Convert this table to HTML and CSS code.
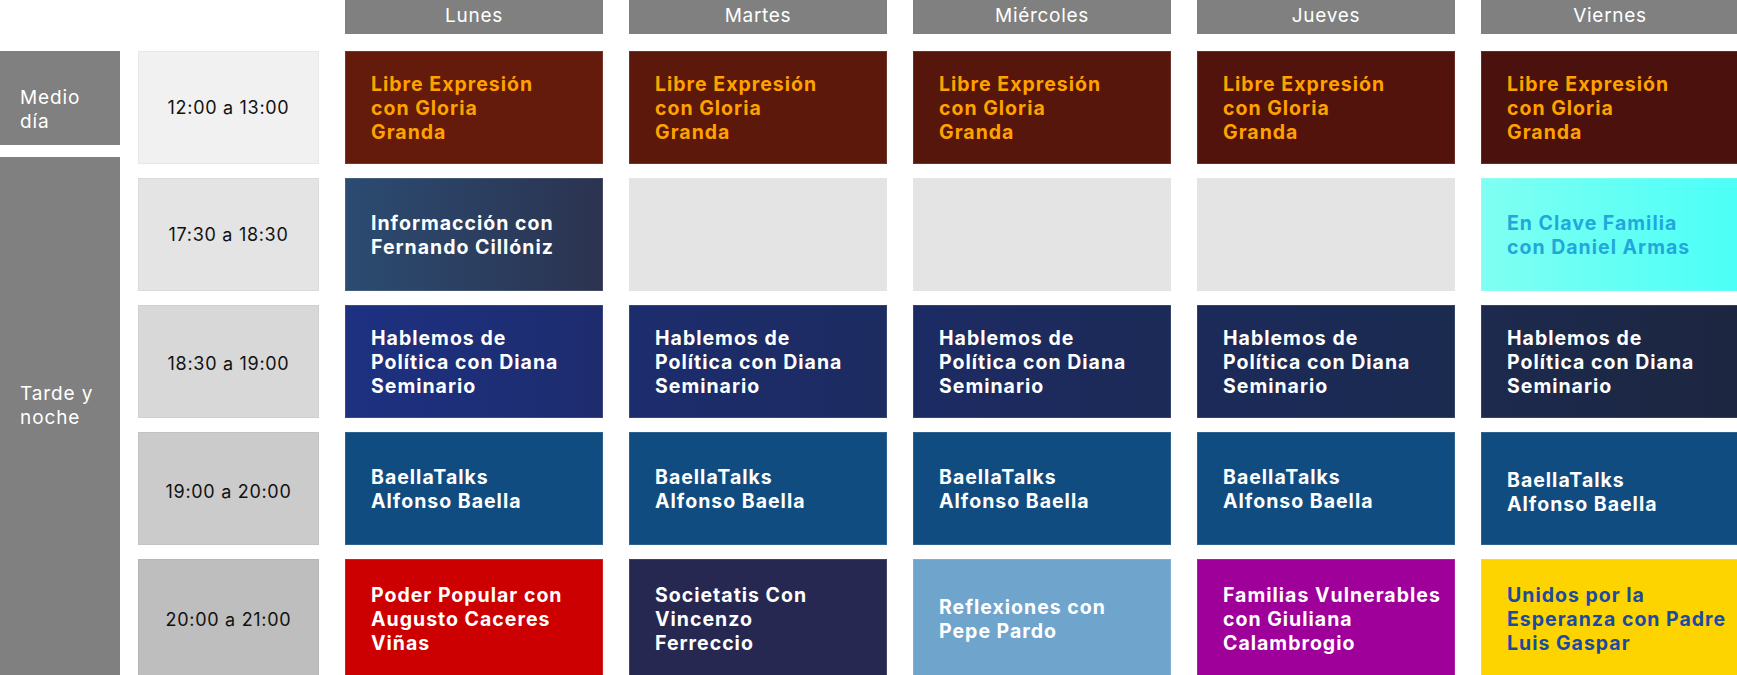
FILE: index.html
```html
<!DOCTYPE html>
<html lang="es">
<head>
  <meta charset="UTF-8">
  <meta name="viewport" content="width=device-width, initial-scale=1.0">
  <title>Programación</title>
  <link rel="stylesheet" href="styles.css">
</head>
<body>
  <div class="schedule">
    <div class="corner"></div>
    <div class="day">Lunes</div>
    <div class="day">Martes</div>
    <div class="day">Miércoles</div>
    <div class="day">Jueves</div>
    <div class="day">Viernes</div>

    <div class="blocks">
      <div class="block block-noon">Medio<br>día</div>
      <div class="block block-night">Tarde y<br>noche</div>
    </div>

    <!-- 12:00 -->
    <div class="time t1">12:00 a 13:00</div>
    <div class="show libre l1">Libre Expresión<br>con Gloria<br>Granda</div>
    <div class="show libre l2">Libre Expresión<br>con Gloria<br>Granda</div>
    <div class="show libre l3">Libre Expresión<br>con Gloria<br>Granda</div>
    <div class="show libre l4">Libre Expresión<br>con Gloria<br>Granda</div>
    <div class="show libre l5">Libre Expresión<br>con Gloria<br>Granda</div>

    <!-- 17:30 -->
    <div class="time t2">17:30 a 18:30</div>
    <div class="show info">Informacción con<br>Fernando Cillóniz</div>
    <div class="show empty"></div>
    <div class="show empty"></div>
    <div class="show empty"></div>
    <div class="show clave">En Clave Familia<br>con Daniel Armas</div>

    <!-- 18:30 -->
    <div class="time t3">18:30 a 19:00</div>
    <div class="show politica p1">Hablemos de<br>Política con Diana<br>Seminario</div>
    <div class="show politica p2">Hablemos de<br>Política con Diana<br>Seminario</div>
    <div class="show politica p3">Hablemos de<br>Política con Diana<br>Seminario</div>
    <div class="show politica p4">Hablemos de<br>Política con Diana<br>Seminario</div>
    <div class="show politica p5">Hablemos de<br>Política con Diana<br>Seminario</div>

    <!-- 19:00 -->
    <div class="time t4">19:00 a 20:00</div>
    <div class="show baella">BaellaTalks<br>Alfonso Baella</div>
    <div class="show baella">BaellaTalks<br>Alfonso Baella</div>
    <div class="show baella">BaellaTalks<br>Alfonso Baella</div>
    <div class="show baella">BaellaTalks<br>Alfonso Baella</div>
    <div class="show baella last">BaellaTalks<br>Alfonso Baella</div>

    <!-- 20:00 -->
    <div class="time t5">20:00 a 21:00</div>
    <div class="show poder">Poder Popular con<br>Augusto Caceres<br>Viñas</div>
    <div class="show societatis">Societatis Con<br>Vincenzo<br>Ferreccio</div>
    <div class="show reflexiones">Reflexiones con<br>Pepe Pardo</div>
    <div class="show familias">Familias Vulnerables<br>con Giuliana<br>Calambrogio</div>
    <div class="show unidos">Unidos por la<br>Esperanza con Padre<br>Luis Gaspar</div>
  </div>
</body>
</html>
```

FILE: styles.css
```css
body { margin: 0; background: #fff; font-family: Inter, 'Open Sans', Arial, sans-serif; overflow: hidden; }
.schedule { display: grid; grid-template-columns: 120px 173px repeat(5, 258px); grid-template-rows: 37px repeat(4, 113px) 120px; column-gap: 26px; row-gap: 14px; width: 1760px; }
.corner { grid-column: 1 / span 2; }
.day { height: 34px; padding-bottom: 3px; box-sizing: border-box; background: #808080; color: #fff; font-size: 19px; letter-spacing: 0.7px; display: flex; align-items: center; justify-content: center; }
.blocks { grid-column: 1; grid-row: 2 / span 5; display: flex; flex-direction: column; gap: 12px; }
.block { background: #808080; color: #fff; font-size: 19px; letter-spacing: 0.9px; line-height: 24px; padding-left: 20px; box-sizing: border-box; }
.block-noon { height: 94px; padding-top: 35px; }
.block-night { flex: 1; margin-bottom: -10px; display: flex; align-items: center; padding-bottom: 34px; }
.time { margin-left: -8px; display: flex; align-items: center; justify-content: center; font-size: 18px; letter-spacing: 0.7px; color: #111; border: 1px solid rgba(0,0,0,0.04); }
.t1 { background: #f1f1f1; }
.t2 { background: #e4e4e4; }
.t3 { background: #d8d8d8; padding-top: 4px; }
.t4 { background: #cbcbcb; padding-top: 6px; }
.t5 { background: #bebebe; }
.show { display: flex; align-items: center; padding-left: 26px; font-size: 19.5px; font-weight: 700; letter-spacing: 1px; line-height: 24px; color: #fff; white-space: nowrap; box-shadow: inset 0 0 0 1px rgba(255,255,255,0.12); }
.libre { color: #ffa200; }
.l1 { background: #641b0b; }
.l2 { background: #5b180b; }
.l3 { background: #57160b; }
.l4 { background: #52130c; }
.l5 { background: #4b110c; }
.info { background: linear-gradient(90deg, #2b4b71, #2c3350); }
.empty { background: #e4e4e4; box-shadow: none; }
.clave { background: linear-gradient(90deg, #80fff2, #4bfff7); color: #20a8da; }
.p1 { background: linear-gradient(90deg, #1d3182, #1e2c6e); }
.p2 { background: linear-gradient(90deg, #1c2d6e, #1c2b60); }
.p3 { background: linear-gradient(90deg, #1c2b64, #1c2a57); }
.p4 { background: linear-gradient(90deg, #1c2a5a, #1b2a4f); }
.p5 { background: linear-gradient(90deg, #1d2a4e, #1c2640); }
.baella { background: #114c80; }
.baella.last { padding-top: 6px; }
.poder { background: #cc0000; }
.societatis { background: #262852; }
.reflexiones { background: #6fa5cc; }
.familias { background: #a0009a; }
.unidos { background: #fed400; color: #1b4aa0; }
```
